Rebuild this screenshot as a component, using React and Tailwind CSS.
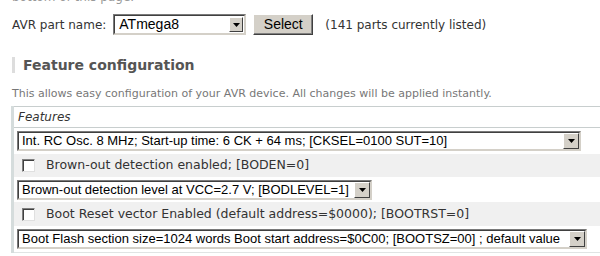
import React from 'react';

// Classic Windows-style dropdown box
function FakeSelect({ value, width }) {
  return (
    <div
      className={`${width} h-[20px] flex items-stretch bg-white border border-t-[#7a7a7a] border-l-[#7a7a7a] border-r-[#d4d0c8] border-b-[#d4d0c8]`}
    >
      <div className="flex-1 flex items-stretch border border-t-[#404040] border-l-[#404040] border-r-[#d4d0c8] border-b-[#d4d0c8] min-w-0">
        <span className="flex-1 pl-[3px] text-[13px] leading-[16px] text-black whitespace-nowrap overflow-hidden font-['Liberation_Sans',Arial,sans-serif]">
          {value}
        </span>
        <span className="w-[16px] flex items-center justify-center bg-[#d4d0c8] border border-t-white border-l-white border-r-[#404040] border-b-[#404040]">
          <svg width="7" height="4" viewBox="0 0 7 4">
            <polygon points="0,0 7,0 3.5,4" fill="#000" />
          </svg>
        </span>
      </div>
    </div>
  );
}

function CheckRow({ label }) {
  return (
    <div className="flex items-center bg-[#f0f0f0] pl-[8px]">
      <span className="w-[13px] h-[13px] bg-white border border-t-[#808080] border-l-[#808080] border-r-[#e0e0e0] border-b-[#e0e0e0] shadow-[inset_1px_1px_0_#404040]" />
      <span className="ml-[11px] text-[12.5px] text-[#333] whitespace-nowrap">{label}</span>
    </div>
  );
}

export default function App() {
  return (
    <div className="w-[600px] h-[256px] overflow-hidden bg-white font-['DejaVu_Sans',Verdana,sans-serif]">
      <div className="pl-[12px]">
        <p className="-mt-[9px] h-[12px] leading-[12px] text-[12px] text-[#999]">bottom of this page.</p>

        {/* part picker */}
        <div className="mt-[11px] flex items-center h-[21px]">
          <span className="text-[12px] text-[#333] mr-[7px]">AVR part name:</span>
          <div className="w-[133px] h-[21px] flex items-stretch bg-white border border-t-[#7a7a7a] border-l-[#7a7a7a] border-r-[#d4d0c8] border-b-[#d4d0c8]">
            <div className="flex-1 flex items-stretch border border-t-[#404040] border-l-[#404040] border-r-[#d4d0c8] border-b-[#d4d0c8]">
              <span className="flex-1 pl-[4px] text-[14px] leading-[17px] text-black font-['Liberation_Sans',Arial,sans-serif]">ATmega8</span>
              <span className="w-[14px] my-[1px] mr-[1px] flex items-center justify-center bg-[#d4d0c8] border border-t-white border-l-white border-r-[#404040] border-b-[#404040]">
                <svg width="7" height="4" viewBox="0 0 7 4">
                  <polygon points="0,0 7,0 3.5,4" fill="#000" />
                </svg>
              </span>
            </div>
          </div>
          <button className="ml-[7px] w-[60px] h-[21px] bg-[#d4d0c8] text-[14px] leading-[17px] text-black font-['Liberation_Sans',Arial,sans-serif] border border-t-white border-l-white border-r-[#404040] border-b-[#404040] shadow-[inset_-1px_-1px_0_#808080]">
            Select
          </button>
          <span className="ml-[12px] text-[12px] text-[#333]">(141 parts currently listed)</span>
        </div>

        {/* heading */}
        <h2 className="mt-[22px] h-[16px] border-l-[3px] border-[#dddddd] pl-[8px] text-[14px] leading-[16px] font-bold text-[#555]">
          Feature configuration
        </h2>
        <p className="mt-[15px] text-[11px] leading-[12px] text-[#777]">
          This allows easy configuration of your AVR device. All changes will be applied instantly.
        </p>
      </div>

      {/* features table */}
      <div className="mt-[6px] ml-[11px] w-[620px] border-l-[3px] border-[#d5dcdc]">
        <div className="h-[22px] flex items-center pl-[4px] border-t border-b border-[#c8cece] text-[12px] italic text-[#333]">
          Features
        </div>
        <div className="h-[26px] flex items-center pl-[3px]">
          <FakeSelect width="w-[564px]" value="Int. RC Osc. 8 MHz; Start-up time: 6 CK + 64 ms; [CKSEL=0100 SUT=10]" />
        </div>
        <div className="h-[23px] flex">
          <div className="flex-1 flex">
            <CheckRow label="Brown-out detection enabled; [BODEN=0]" />
            <div className="flex-1 bg-[#f0f0f0]" />
          </div>
        </div>
        <div className="h-[25px] flex items-center pl-[3px]">
          <FakeSelect width="w-[355px]" value="Brown-out detection level at VCC=2.7 V; [BODLEVEL=1]" />
        </div>
        <div className="h-[24px] flex">
          <div className="flex-1 flex">
            <CheckRow label="Boot Reset vector Enabled (default address=$0000); [BOOTRST=0]" />
            <div className="flex-1 bg-[#f0f0f0]" />
          </div>
        </div>
        <div className="h-[27px] flex items-center pl-[3px] border-b border-[#e0e4e4]">
          <FakeSelect width="w-[570px]" value="Boot Flash section size=1024 words Boot start address=$0C00; [BOOTSZ=00] ; default value" />
        </div>
      </div>
    </div>
  );
}
